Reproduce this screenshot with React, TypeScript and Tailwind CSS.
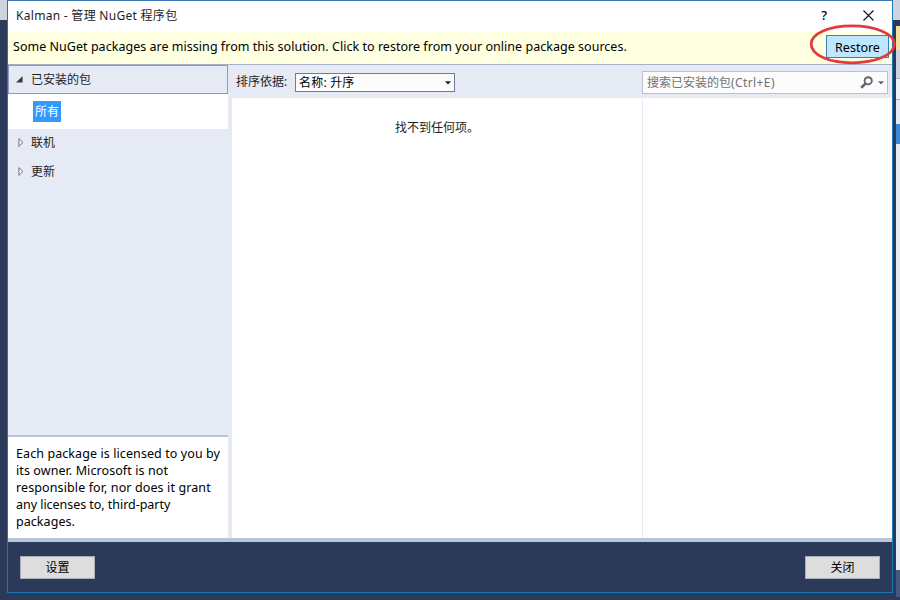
import React from 'react';

function TreeNode({ label }: { label: string }) {
  return (
    <div className="flex h-[29px] items-center pb-[2px] pl-[10px]">
      <svg width="6" height="9" viewBox="0 0 6 9" className="mr-[7px]">
        <path d="M0.9 0.6L4.9 4.5L0.9 8.4Z" fill="#f4f5fa" stroke="#66676d" strokeWidth="0.9" />
      </svg>
      {label}
    </div>
  );
}

function Sidebar() {
  return (
    <aside className="flex w-[220px] shrink-0 flex-col">
      <div className="flex h-[29px] shrink-0 items-center border border-[#8e9bbc] pl-[7px] text-[#1e1e1e]">
        <svg width="7" height="7" viewBox="0 0 7 7" className="mr-2">
          <path d="M6.3 0.6V6.3H0.6Z" fill="#3b3c42" stroke="#2b2c30" strokeWidth="0.4" />
        </svg>
        已安装的包
      </div>
      <div className="flex h-[35px] shrink-0 items-center bg-white pl-[25px]">
        <span className="flex h-[21px] w-7 items-center justify-center bg-[#3399ff] text-white">所有</span>
      </div>
      <TreeNode label="联机" />
      <TreeNode label="更新" />
      <div className="flex-1" />
      <div className="h-[103px] shrink-0 whitespace-nowrap border-t-2 border-[#bbc5d9] bg-white pl-2 pt-2 text-[12.5px] leading-[17px] text-black">
        <p className="tracking-[0.09px]">Each package is licensed to you by</p>
        <p className="tracking-[0.09px]">its owner. Microsoft is not</p>
        <p className="tracking-[0.11px]">responsible for, nor does it grant</p>
        <p className="tracking-[-0.04px]">any licenses to, third-party</p>
        <p className="tracking-[0.05px]">packages.</p>
      </div>
    </aside>
  );
}

function Toolbar() {
  return (
    <div className="flex h-[33px] shrink-0 items-start pl-1 pr-1">
      <span className="mt-[7px] w-[59px] leading-5">排序依据:</span>
      <div className="mt-2 flex h-[19px] w-[160px] items-center justify-between border border-[#717b99] bg-[#fcfcfd] pl-[3px] pr-[3px] text-black">
        <span className="tracking-[0.2px]">名称: 升序</span>
        <svg width="6" height="4" viewBox="0 0 6 4" className="mt-px"><path d="M0 0.3H6L3 3.6Z" fill="#1e1e1e" /></svg>
      </div>
      <div className="ml-auto mt-[6px] flex h-[23px] w-[246px] items-center border border-[#b7c0d5] bg-[#fcfcfd] pl-1 pr-[3px] text-[#717171]">
        <span className="flex-1 whitespace-nowrap">搜索已安装的包<span className="tracking-[0.4px]">(Ctrl+E)</span></span>
        <svg width="13" height="13" viewBox="0 0 13 13" fill="none" className="mr-[5px]">
          <circle cx="8.2" cy="4.8" r="3.6" stroke="#65666b" strokeWidth="1.9" />
          <path d="M5.7 7.4L1.2 11.8" stroke="#65666b" strokeWidth="2.7" />
        </svg>
        <svg width="6" height="4" viewBox="0 0 6 4"><path d="M0 0.3H6L3 3.5Z" fill="#65666b" /></svg>
      </div>
    </div>
  );
}

export default function App() {
  return (
    <div className="relative flex h-[600px] w-[900px] overflow-hidden bg-[#2b3a59] font-['Noto_Sans','Noto_Sans_CJK_SC',sans-serif] text-[12px] text-[#1e1e1e]">
      <div className="flex w-[7px] shrink-0 flex-col">
        <div className="h-5 bg-[#cfd3df]" />
        <div className="flex-1 bg-[#2b3a59]" />
      </div>
      <div className="flex h-[593px] w-[886px] shrink-0 flex-col border border-[#1979b5] border-t-[#3c78b4] bg-[#e6eaf5]">
        <header className="flex h-[31px] shrink-0 items-center bg-white pb-[2px] pl-2">
          <span className="flex-1 tracking-[0.29px]">Kalman - 管理 NuGet 程序包</span>
          <span className="mr-[36px] text-[13px] font-medium text-black">?</span>
          <svg width="11" height="11" viewBox="0 0 11 11" className="mr-[18px]">
            <path d="M0.5 0.5L10.5 10.5M10.5 0.5L0.5 10.5" stroke="#111" strokeWidth="1.1" />
          </svg>
        </header>
        <div className="flex h-[33px] shrink-0 items-start justify-between border-b border-[#a6afc5] bg-[#ffffe1] pl-[5px] pr-[3px] text-[12.5px] text-black">
          <span className="mt-[5px] whitespace-nowrap leading-5 tracking-[0.03px]">Some NuGet packages are missing from this solution. Click to restore from your online package sources.</span>
          <button className="mt-[3px] h-[23px] w-[63px] border border-[#3c7fb1] bg-[#bee6fd] pt-[2px] leading-[19px]">Restore</button>
        </div>
        <div className="flex min-h-0 flex-1">
          <Sidebar />
          <main className="ml-1 flex min-w-0 flex-1 flex-col">
            <Toolbar />
            <div className="flex flex-1 bg-white">
              <div className="w-[411px] border-r border-[#e6eaf5] pt-[21px] text-center leading-[18px]">
                找不到任何项。
              </div>
              <div className="flex-1" />
            </div>
          </main>
        </div>
        <footer className="flex h-[54px] shrink-0 items-start justify-between border-t-4 border-[#b9c5d9] bg-[#2b3a59] px-3 pt-[14px]">
          <button className="h-[23px] w-[75px] border border-[#aaaeb8] bg-[#dddddd] text-black">设置</button>
          <button className="h-[23px] w-[75px] border border-[#aaaeb8] bg-[#dddddd] text-black">关闭</button>
        </footer>
      </div>
      <div className="flex flex-1 flex-col pl-[3px]">
        <div className="-ml-[3px] h-5 bg-[#cfd3df]" />
        <div className="h-[6px]" />
        <div className="h-6 bg-[#f5dfa0]" />
        <div className="h-[28px] bg-[#cfd3df]" />
        <div className="h-[22px] border-y border-[#a6afc5] bg-[#eef0f6]" />
        <div className="h-6 bg-[#e6eaf5]" />
        <div className="h-5 bg-[#3e86d6]" />
        <div className="h-[426px] bg-[#e9ebf2]" />
        <div className="h-[27px] bg-[#46587b]" />
      </div>
      <svg className="pointer-events-none absolute left-[808px] top-[22px]" width="90" height="44" viewBox="0 0 90 44" fill="none">
        <path d="M44 3.8C67 3.8 86 11.5 86.5 22C86.5 33 67 40.8 44 40.8C21 40.8 3.2 33 3.2 22C3.2 11.5 21 3.8 44 3.8Z" stroke="#e23b3b" strokeWidth="2.8" />
      </svg>
    </div>
  );
}
